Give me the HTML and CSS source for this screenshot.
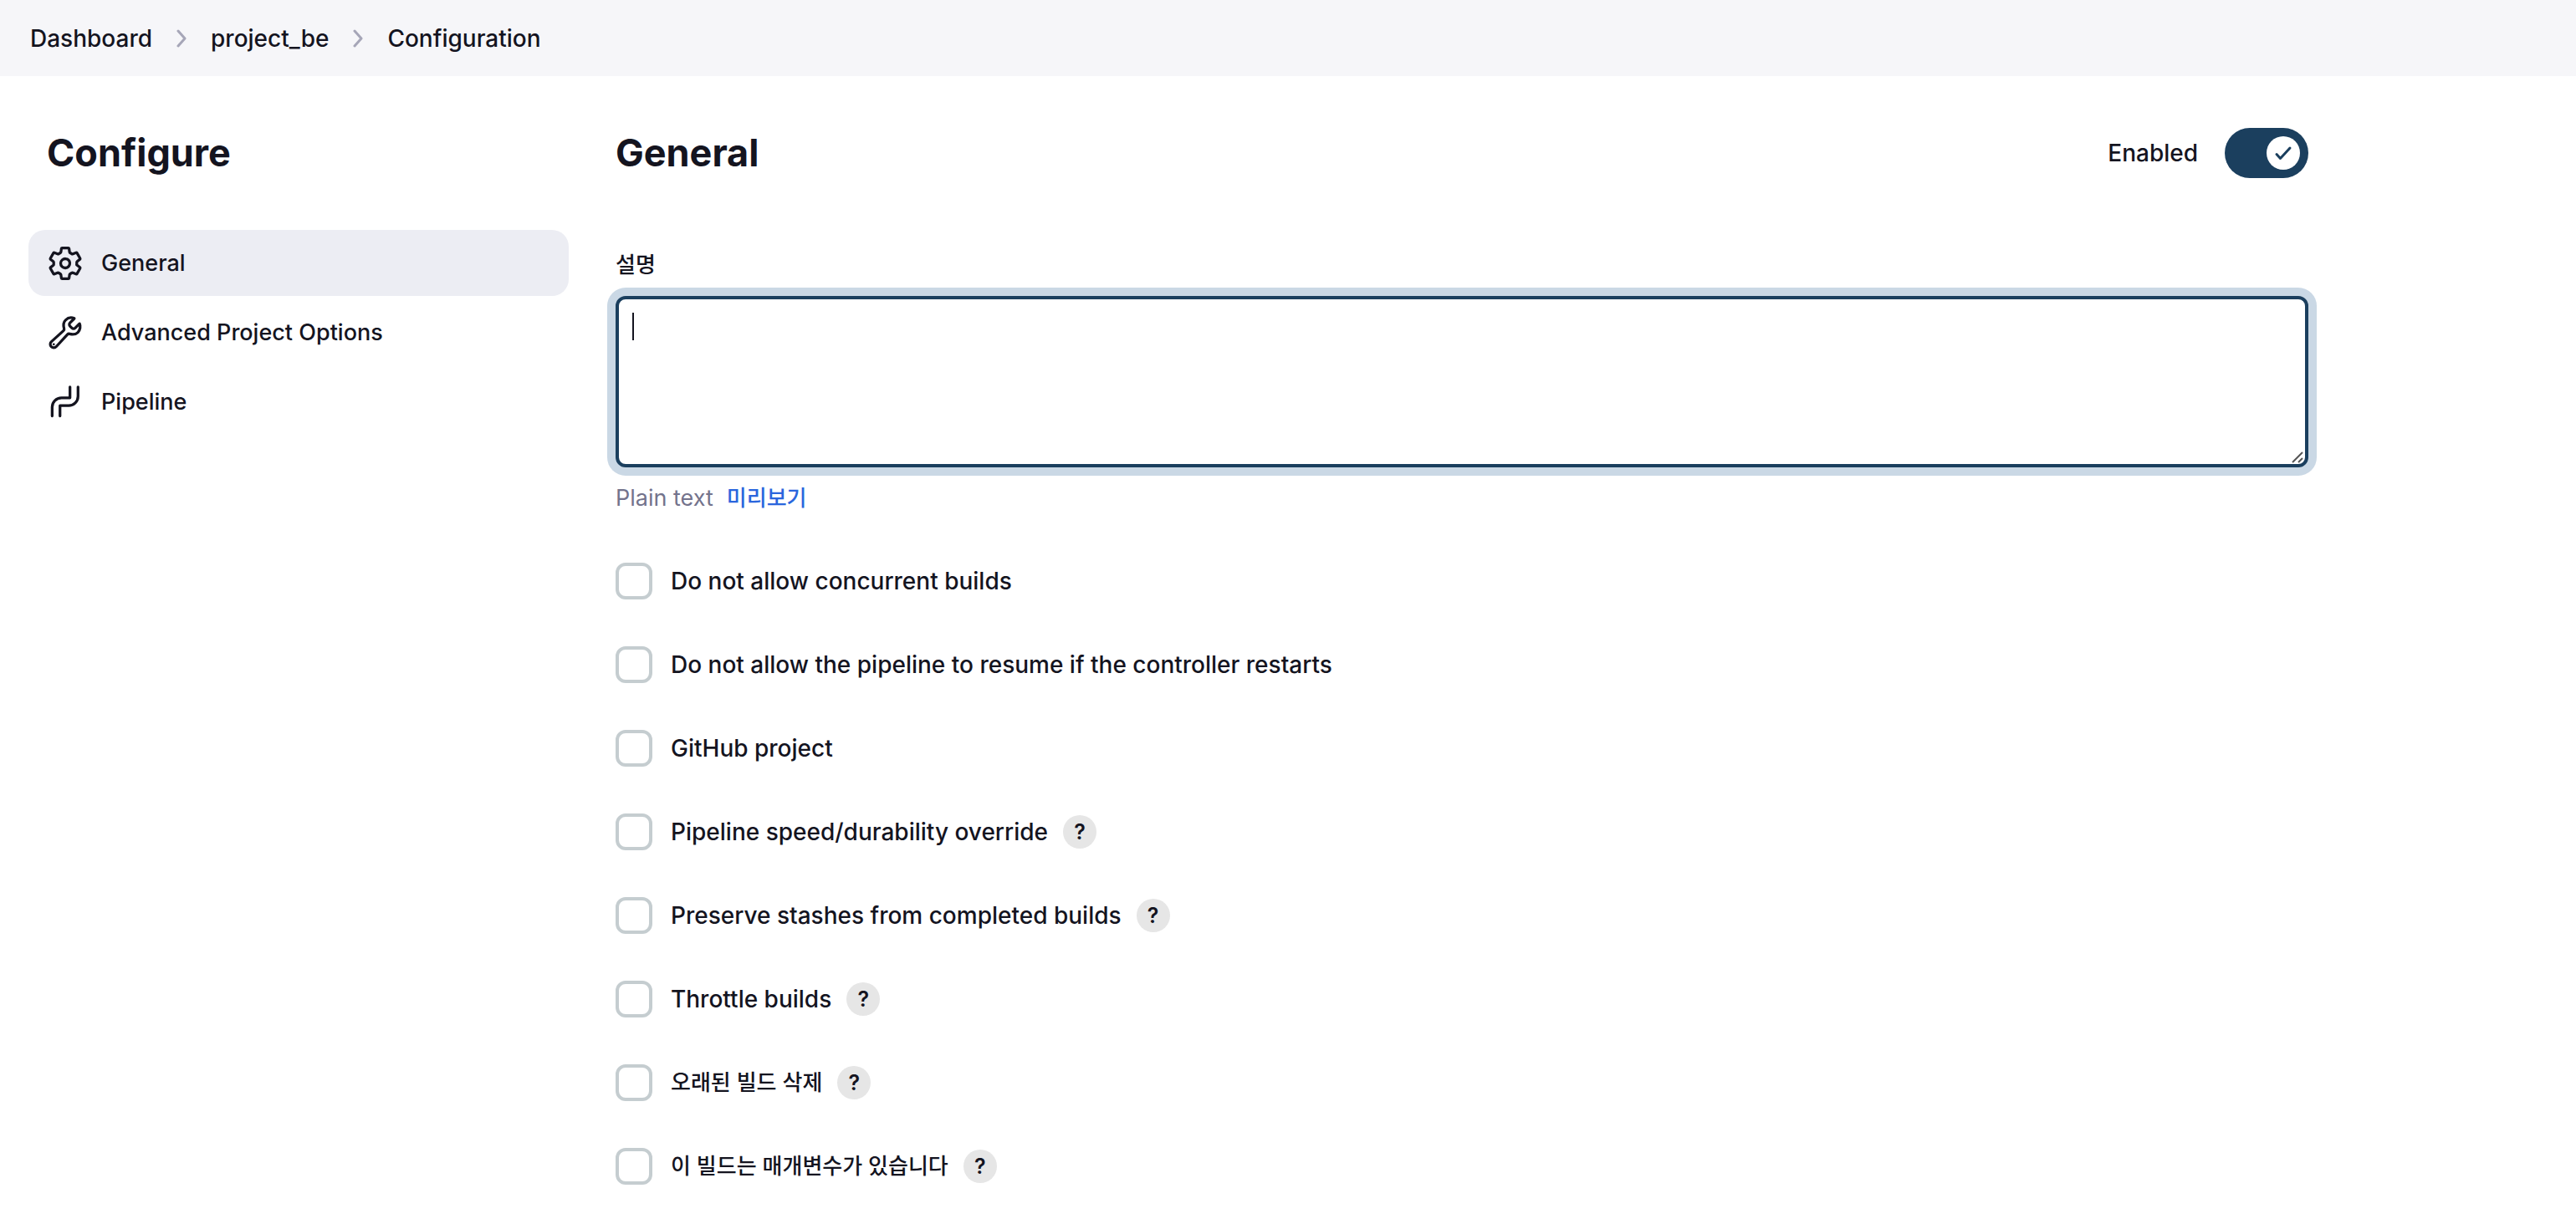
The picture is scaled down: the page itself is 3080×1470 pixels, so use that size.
FILE: index.html
```html
<!DOCTYPE html>
<html lang="ko">
<head>
<meta charset="utf-8">
<meta name="viewport" content="width=device-width, initial-scale=1">
<title>project_be Config</title>
<link rel="stylesheet" href="styles.css">
</head>
<body>
<nav class="breadcrumbs" aria-label="Breadcrumb">
  <a href="#dashboard">Dashboard</a>
  <svg class="chevron" viewBox="0 0 12 22" aria-hidden="true"><path d="M2 2l8 9-8 9"/></svg>
  <a href="#project">project_be</a>
  <svg class="chevron" viewBox="0 0 12 22" aria-hidden="true"><path d="M2 2l8 9-8 9"/></svg>
  <a href="#configuration">Configuration</a>
</nav>
<div class="page">
  <aside class="sidebar">
    <h1 class="title">Configure</h1>
    <nav class="tasks" aria-label="Sections">
      <a class="task task-active" href="#general" aria-current="page">
        <svg class="icon" viewBox="0 0 512 512" aria-hidden="true"><path d="M262.29 192.31a64 64 0 1057.4 57.4 64.13 64.13 0 00-57.4-57.4zM416.39 256a154.34 154.34 0 01-1.53 20.79l45.21 35.46a10.81 10.81 0 012.45 13.75l-42.77 74a10.81 10.81 0 01-13.14 4.59l-44.9-18.08a16.11 16.11 0 00-15.17 1.75A164.48 164.48 0 01325 400.8a15.94 15.94 0 00-8.82 12.14l-6.73 47.89a11.08 11.08 0 01-10.68 9.17h-85.54a11.11 11.11 0 01-10.69-8.87l-6.72-47.82a16.07 16.07 0 00-9-12.22 155.3 155.3 0 01-21.46-12.57 16 16 0 00-15.11-1.71l-44.89 18.07a10.81 10.81 0 01-13.14-4.58l-42.77-74a10.8 10.8 0 012.45-13.75l38.21-30a16.05 16.05 0 006-14.08c-.36-4.17-.58-8.33-.58-12.5s.21-8.27.58-12.35a16 16 0 00-6.07-13.94l-38.19-30A10.81 10.81 0 0149.48 186l42.77-74a10.81 10.81 0 0113.14-4.59l44.9 18.08a16.11 16.11 0 0015.17-1.75A164.48 164.48 0 01187 111.2a15.94 15.94 0 008.82-12.14l6.73-47.89A11.08 11.08 0 01213.23 42h85.54a11.11 11.11 0 0110.69 8.87l6.72 47.82a16.07 16.07 0 009 12.22 155.3 155.3 0 0121.46 12.57 16 16 0 0015.11 1.71l44.89-18.07a10.81 10.81 0 0113.14 4.58l42.77 74a10.8 10.8 0 01-2.45 13.75l-38.21 30a16.05 16.05 0 00-6.05 14.08c.33 4.14.55 8.3.55 12.47z"/></svg>
        <span>General</span>
      </a>
      <a class="task" href="#advanced">
        <svg class="icon" viewBox="0 0 512 512" aria-hidden="true"><path d="M393.87 190a32.1 32.1 0 01-45.25 0l-26.57-26.57a32.09 32.09 0 010-45.26L382.19 58a1 1 0 00-.3-1.64c-38.82-16.64-89.15-8.16-121.11 23.57-30.58 30.35-32.32 76-21.12 115.84a31.93 31.93 0 01-9.06 32.08L64 380a48.17 48.17 0 1068 68l153.86-167a31.93 31.93 0 0131.6-9.13c39.54 10.59 84.54 8.6 114.72-21.19 32.49-32 39.5-88.56 23.75-120.93a1 1 0 00-1.6-.26z"/><circle class="dot" cx="96" cy="416" r="16"/></svg>
        <span>Advanced Project Options</span>
      </a>
      <a class="task" href="#pipeline">
        <svg class="icon" viewBox="0 0 512 512" aria-hidden="true"><path d="M74 448V325a130 130 0 01130-130h118V44M183 448V305h121a130 130 0 00130-130V44"/></svg>
        <span>Pipeline</span>
      </a>
    </nav>
  </aside>
  <main class="content">
    <form>
      <header class="heading">
        <h2 class="title">General</h2>
        <label class="toggle">
          <span>Enabled</span>
          <input class="toggle-input" type="checkbox" checked>
          <span class="toggle-track"><span class="toggle-knob"><svg viewBox="0 0 40 40" aria-hidden="true"><path d="M12 21.5l4.5 5L28 14"/></svg></span></span>
        </label>
      </header>
      <label class="field-label korean" for="description">설명</label>
      <div class="editor">
        <textarea id="description" class="textarea" autofocus></textarea>
        <span class="caret"></span>
        <svg class="grip" viewBox="0 0 14 14" aria-hidden="true"><path d="M1 13L13 1M8 13l5-5"/></svg>
      </div>
      <p class="hint"><span>Plain text</span><a class="korean" href="#preview">미리보기</a></p>
      <div class="options">
        <div class="option"><label><input class="check" type="checkbox"><span>Do not allow concurrent builds</span></label></div>
        <div class="option"><label><input class="check" type="checkbox"><span>Do not allow the pipeline to resume if the controller restarts</span></label></div>
        <div class="option"><label><input class="check" type="checkbox"><span>GitHub project</span></label></div>
        <div class="option"><label><input class="check" type="checkbox"><span>Pipeline speed/durability override</span></label><button class="help" type="button">?</button></div>
        <div class="option"><label><input class="check" type="checkbox"><span>Preserve stashes from completed builds</span></label><button class="help" type="button">?</button></div>
        <div class="option"><label><input class="check" type="checkbox"><span>Throttle builds</span></label><button class="help" type="button">?</button></div>
        <div class="option"><label><input class="check" type="checkbox"><span class="korean">오래된 빌드 삭제</span></label><button class="help" type="button">?</button></div>
        <div class="option"><label><input class="check" type="checkbox"><span class="korean">이 빌드는 매개변수가 있습니다</span></label><button class="help" type="button">?</button></div>
      </div>
    </form>
  </main>
</div>
</body>
</html>
```
FILE: styles.css
```css
:root {
  --text: #14141f;
  --muted: #73738c;
  --accent: #1b3f5e;
  --ring: #cad8e5;
  --link: #2a66dd;
}

* {
  box-sizing: border-box;
}

body {
  margin: 0;
  background: #fff;
  color: var(--text);
  font: 500 28px/40px Inter, "Noto Sans CJK KR", sans-serif;
}

a {
  color: inherit;
  text-decoration: none;
}

.korean {
  font-family: Inter, "Noto Sans CJK KR", sans-serif;
  font-size: 26px;
}

.breadcrumbs {
  display: flex;
  align-items: center;
  gap: 29px;
  padding: 26px 36px 25px;
  background: #f6f6f9;
}

.chevron {
  width: 12px;
  height: 22px;
  fill: none;
  stroke: #a6a6b8;
  stroke-width: 3;
  stroke-linecap: round;
  stroke-linejoin: round;
}

.page {
  display: grid;
  grid-template-columns: 646px minmax(0, 2024px);
  gap: 56px;
  padding: 60px 34px 40px;
}

.title {
  margin: 0;
  font-size: 45px;
  line-height: 64px;
  font-weight: 700;
}

.sidebar .title {
  padding-left: 22px;
}

.tasks {
  display: flex;
  flex-direction: column;
  gap: 4px;
  margin-top: 60px;
}

.task {
  display: flex;
  align-items: center;
  gap: 21px;
  min-height: 79px;
  padding: 0 22px;
  border-radius: 20px;
  font-size: 27px;
}

.task-active {
  background: #ecedf3;
}

.icon {
  width: 44px;
  height: 44px;
  fill: none;
  stroke: currentColor;
  stroke-width: 38;
  stroke-linecap: round;
  stroke-linejoin: round;
}

.icon .dot {
  fill: currentColor;
  stroke: none;
}

.heading {
  display: flex;
  justify-content: space-between;
  align-items: center;
}

.toggle {
  display: flex;
  align-items: center;
  gap: 32px;
}

.toggle-input {
  position: absolute;
  opacity: 0;
}

.toggle-track {
  display: flex;
  justify-content: flex-end;
  width: 100px;
  padding: 10px;
  border-radius: 30px;
  background: var(--accent);
}

.toggle-knob {
  width: 40px;
  height: 40px;
  border-radius: 50%;
  background: #fff;
}

.toggle-knob svg {
  display: block;
  fill: none;
  stroke: var(--accent);
  stroke-width: 3;
  stroke-linecap: round;
  stroke-linejoin: round;
}

.field-label {
  display: block;
  margin-top: 82px;
}

.editor {
  position: relative;
  margin-top: 17px;
}

.textarea {
  display: block;
  width: 100%;
  height: 205px;
  padding: 16px;
  border: 4px solid var(--accent);
  border-radius: 12px;
  outline: 0;
  box-shadow: 0 0 0 10px var(--ring);
  caret-color: transparent;
  font: inherit;
  resize: none;
}

.caret {
  position: absolute;
  top: 20px;
  left: 20px;
  width: 2px;
  height: 33px;
  background: var(--text);
}

.grip {
  position: absolute;
  right: 6px;
  bottom: 5px;
  width: 14px;
  height: 14px;
  fill: none;
  stroke: #555;
  stroke-width: 2;
}

.hint {
  display: flex;
  gap: 16px;
  margin: 17px 0 0;
  color: var(--muted);
  font-size: 27px;
  font-weight: 400;
}

.hint a {
  color: var(--link);
  font-weight: 500;
}

.options {
  display: flex;
  flex-direction: column;
  gap: 56px;
  margin-top: 57px;
}

.option,
.option label {
  display: flex;
  align-items: center;
}

.option {
  gap: 18px;
}

.option label {
  gap: 22px;
  height: 44px;
}

.check {
  appearance: none;
  width: 44px;
  height: 44px;
  margin: 0;
  border: 4px solid #c5cdd0;
  border-radius: 12px;
}

.help {
  width: 40px;
  height: 40px;
  padding: 0;
  border: 0;
  border-radius: 50%;
  background: #e6e6e6;
  color: var(--text);
  font: 600 25px/40px Inter, sans-serif;
}
```
